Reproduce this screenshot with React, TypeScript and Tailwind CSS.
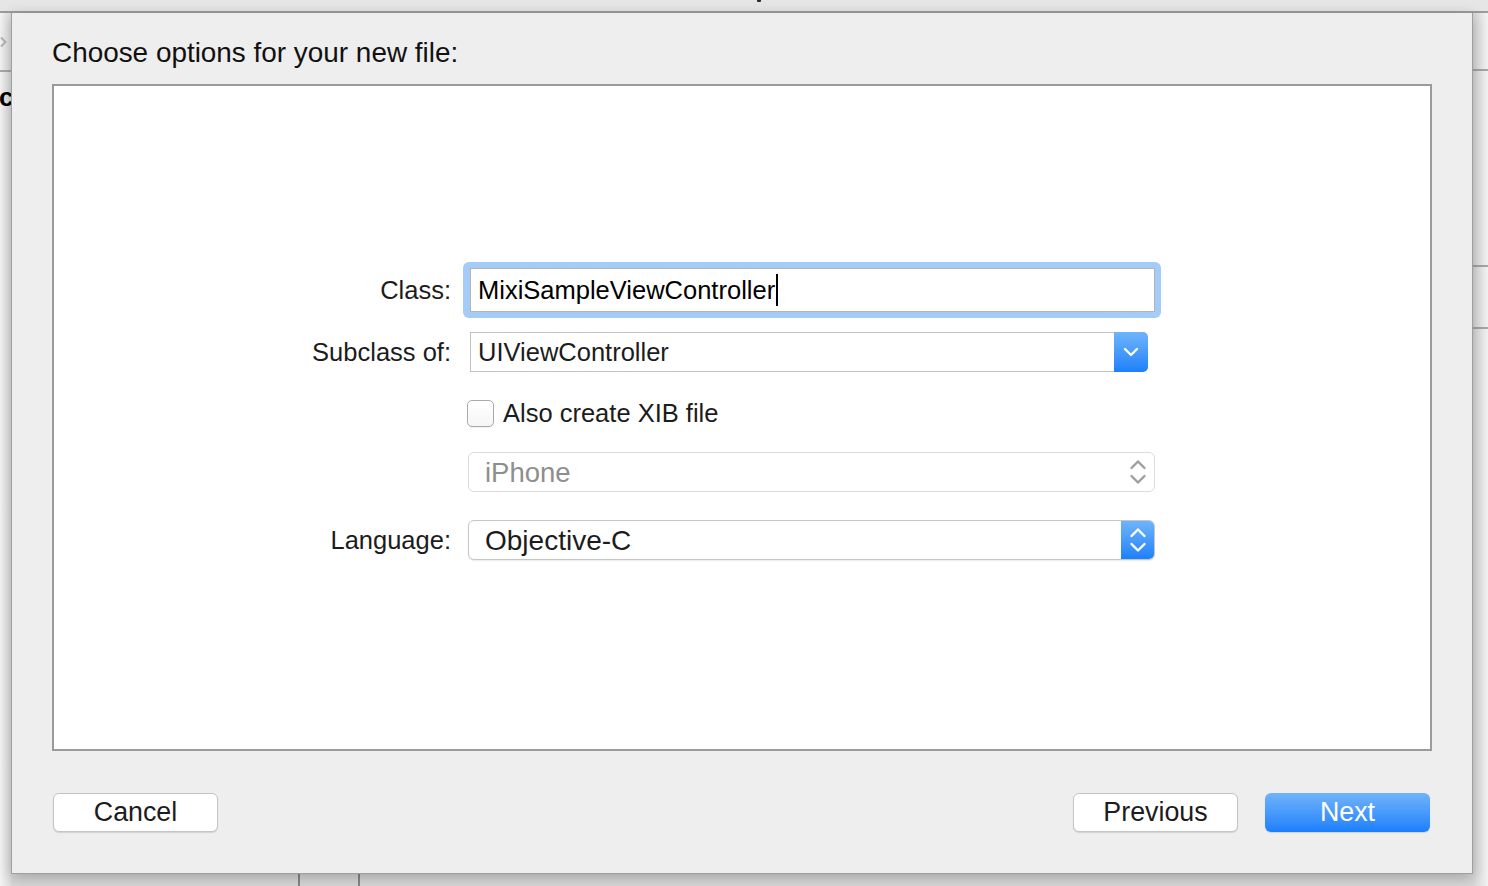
import React from "react";

const font = "font-['Liberation_Sans','Helvetica_Neue',Arial,sans-serif]";

function ChevronDown({ className }: { className?: string }) {
  return (
    <svg className={className} width="16" height="10" viewBox="0 0 16 10" fill="none">
      <path d="M2 2l6 6 6-6" stroke="currentColor" strokeWidth="2.4" strokeLinecap="round" strokeLinejoin="round" />
    </svg>
  );
}

function UpDown({ className }: { className?: string }) {
  return (
    <svg className={className} width="18" height="28" viewBox="0 0 18 28" fill="none">
      <path d="M2.5 10l6.5-6.5 6.5 6.5" stroke="currentColor" strokeWidth="2.4" strokeLinecap="round" strokeLinejoin="round" />
      <path d="M2.5 18l6.5 6.5 6.5-6.5" stroke="currentColor" strokeWidth="2.4" strokeLinecap="round" strokeLinejoin="round" />
    </svg>
  );
}

function Label({ children }: { children: React.ReactNode }) {
  return <div className="w-[397px] shrink-0 text-right text-[25.5px] text-[#1c1c1c] leading-[40px]">{children}</div>;
}

export default function App() {
  return (
    <div className={`w-[1488px] h-[886px] overflow-hidden bg-[#e6e6e6] flex flex-col ${font}`}>
      {/* window toolbar behind the sheet */}
      <div className="h-[13px] shrink-0 border-b-2 border-[#9c9c9c] relative">
        <span className="absolute left-[757px] -top-[1px] w-[4px] h-[3px] bg-[#2a2a2a] rounded-[1px]" />
      </div>

      <div className="flex flex-1 min-h-0">
        {/* left strip of the window behind */}
        <div className="w-[11px] shrink-0 flex flex-col bg-gradient-to-r from-[#f4f4f4] to-[#dedede]">
          <div className="h-[57px] flex items-center">
            <svg width="8" height="12" viewBox="0 0 8 12" fill="none" className="mt-[1px]">
              <path d="M1 1.5l4.5 4.5L1 10.5" stroke="#b4b4b4" strokeWidth="2" />
            </svg>
          </div>
          <div className="h-[2px] bg-[#a8a8a8]" />
          <div className="h-[50px] flex items-center text-[26px] font-bold text-black -ml-[1px] leading-none">c</div>
        </div>

        {/* sheet */}
        <div className="w-[1462px] shrink-0 flex flex-col">
          <div className="h-[861px] shrink-0 bg-[#eeeeee] border-x border-b border-[#9f9f9f] shadow-[0_4px_14px_rgba(0,0,0,0.25)] px-[40px] flex flex-col relative z-10">
            <div className="h-[71px] pt-[24px] text-[27.9px] leading-[32px] text-[#111]">Choose options for your new file:</div>

            <div className="w-[1380px] h-[667px] bg-white border-2 border-[#9b9b9b] pt-[176px] flex flex-col">
              {/* Class */}
              <div className="flex items-center">
                <Label>Class:</Label>
                <div className="ml-[12px] w-[698px] h-[56px] rounded-[6px] bg-[#a5ccf6] p-[6px] pl-[7px]">
                  <div className="h-full bg-white border border-[#b4b4b4] flex items-center pl-[7px] text-[25.5px] text-black">
                    <span className="pt-[1px]">MixiSampleViewController</span>
                    <span className="w-[2px] h-[32px] bg-black ml-px" />
                  </div>
                </div>
              </div>

              {/* Subclass of */}
              <div className="flex items-center mt-[14px]">
                <Label>Subclass of:</Label>
                <div className="ml-[19px] w-[678px] h-[40px] flex">
                  <div className="flex-1 bg-white border border-[#c3c3c3] border-r-0 flex items-center pl-[7px] pt-[1px] text-[25.5px] text-[#1c1c1c]">
                    UIViewController
                  </div>
                  <div className="w-[34px] rounded-r-[5px] bg-gradient-to-b from-[#6eb4fa] to-[#1a80fb] flex items-center justify-center text-white">
                    <ChevronDown />
                  </div>
                </div>
              </div>

              {/* checkbox */}
              <div className="flex items-center mt-[28px] h-[27px]">
                <div className="w-[397px] shrink-0" />
                <div className="ml-[16px] w-[27px] h-[27px] rounded-[5px] border border-[#a9a9a9] bg-gradient-to-b from-white to-[#f6f6f6] shadow-[0_1px_0_rgba(0,0,0,0.05)]" />
                <span className="ml-[9px] text-[25.5px] text-[#1c1c1c] leading-[27px]">Also create XIB file</span>
              </div>

              {/* iPhone (disabled) */}
              <div className="flex items-center mt-[25px]">
                <div className="w-[397px] shrink-0" />
                <div className="ml-[17px] w-[687px] h-[40px] rounded-[6px] border border-[#dcdcdc] bg-white flex items-center pl-[16px] pr-[7px] text-[27.5px] text-[#8e8e8e]">
                  <span className="flex-1 pt-[1px]">iPhone</span>
                  <UpDown className="text-[#9d9d9d]" />
                </div>
              </div>

              {/* Language */}
              <div className="flex items-center mt-[28px]">
                <Label>Language:</Label>
                <div className="ml-[17px] w-[687px] h-[40px] flex rounded-[6px] bg-white border border-[#c6c6c6] shadow-[0_1px_1px_rgba(0,0,0,0.08)] overflow-hidden">
                  <div className="flex-1 flex items-center pl-[16px] pt-[1px] text-[28px] text-[#1c1c1c]">Objective-C</div>
                  <div className="w-[33px] bg-gradient-to-b from-[#6eb4fa] to-[#1a80fb] flex items-center justify-center text-white">
                    <UpDown />
                  </div>
                </div>
              </div>
            </div>

            {/* buttons */}
            <div className="flex items-center mt-[42px] pl-px pr-[2px]">
              <button className="w-[165px] h-[39px] rounded-[6px] bg-white border border-[#c4c4c4] shadow-[0_1px_1px_rgba(0,0,0,0.12)] text-[26.8px] text-[#1c1c1c] leading-none">
                Cancel
              </button>
              <div className="flex-1" />
              <button className="w-[165px] h-[39px] rounded-[6px] bg-white border border-[#c4c4c4] shadow-[0_1px_1px_rgba(0,0,0,0.12)] text-[26.8px] text-[#1c1c1c] leading-none">
                Previous
              </button>
              <button className="ml-[27px] w-[165px] h-[39px] rounded-[6px] bg-gradient-to-b from-[#6fb3fa] to-[#197ffb] shadow-[0_1px_1px_rgba(0,0,0,0.12)] text-[26.8px] text-white leading-none">
                Next
              </button>
            </div>
          </div>

          {/* window behind, below the sheet */}
          <div className="flex-1 bg-[#d9d9d9] flex">
            <div className="w-[287px]" />
            <div className="w-[2px] bg-[#888888]" />
            <div className="w-[58px]" />
            <div className="w-[2px] bg-[#888888]" />
          </div>
        </div>

        {/* right strip of the window behind */}
        <div className="flex-1 flex flex-col bg-gradient-to-r from-[#d8d8d8] to-[#f2f2f2]">
          <div className="h-[56px]" />
          <div className="h-[2px] bg-[#a4a4a4]" />
          <div className="h-[194px]" />
          <div className="h-[2px] bg-[#a4a4a4]" />
          <div className="h-[60px]" />
          <div className="h-[2px] bg-[#a4a4a4]" />
        </div>
      </div>
    </div>
  );
}
